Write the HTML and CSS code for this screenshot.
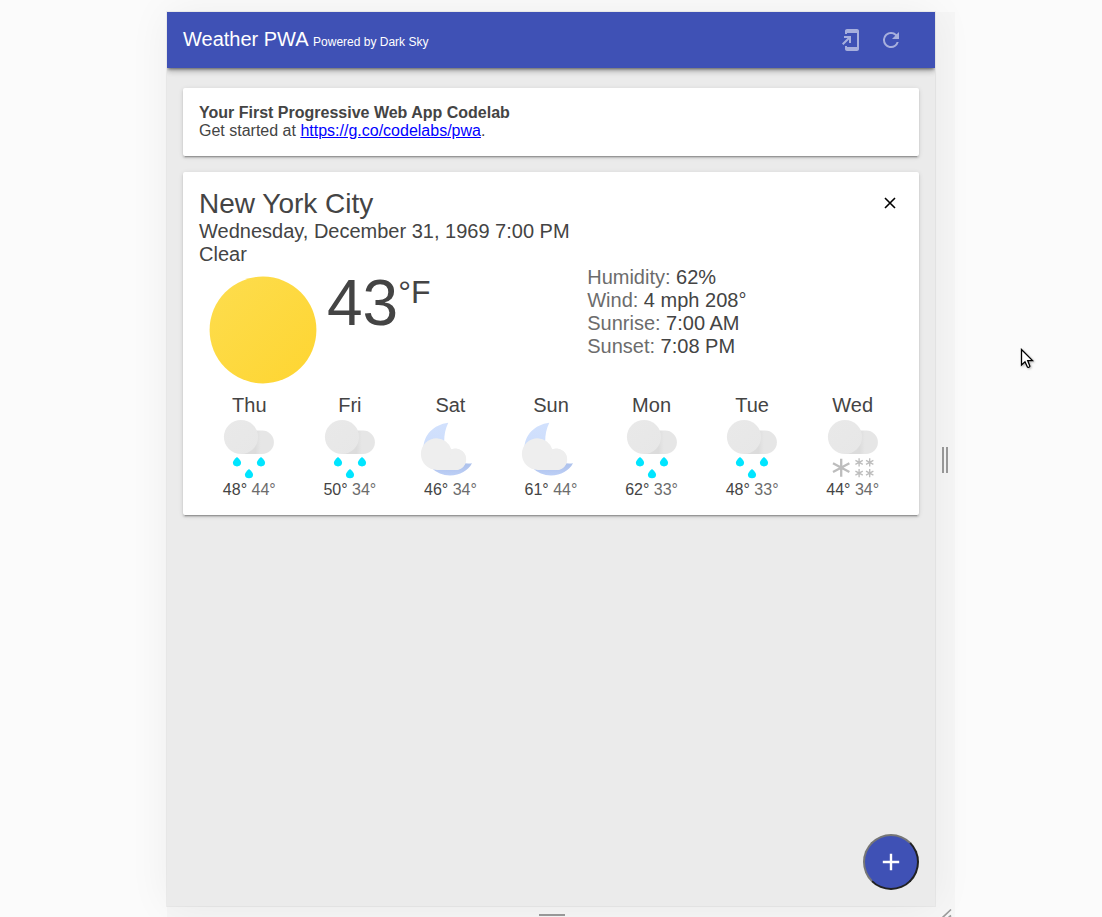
FILE: index.html
```html
<!DOCTYPE html>
<html lang="en">
<head>
<meta charset="utf-8">
<title>Weather PWA</title>
<link rel="stylesheet" href="styles.css">
</head>
<body>
<svg class="defs" width="0" height="0" aria-hidden="true">
  <defs>
    <linearGradient id="sunFill" x1="0" y1="0" x2="1" y2="1"><stop offset="0" stop-color="#fddd4e"/><stop offset="1" stop-color="#fed531"/></linearGradient>
    <linearGradient id="moonFill" x1="0" y1="0" x2="0" y2="1"><stop offset="0" stop-color="#d2e1fd"/><stop offset=".65" stop-color="#cbdcfb"/><stop offset=".8" stop-color="#aec2ec"/><stop offset="1" stop-color="#bdcff6"/></linearGradient>
    <linearGradient id="puffFill" x1="0" y1="0" x2="1" y2="0"><stop offset=".44" stop-color="#dcdcdc"/><stop offset=".6" stop-color="#e6e6e6"/></linearGradient>
    <linearGradient id="cloudFill" x1="0" y1="0" x2="1" y2="1"><stop offset="0" stop-color="#e9e9e9"/><stop offset="1" stop-color="#e7e7e7"/></linearGradient>
    <g id="cloud">
      <path d="M24 37V13.6H45.2a11.7 11.7 0 0 1 0 23.4z" fill="url(#puffFill)"/>
      <circle cx="24" cy="20" r="17.1" fill="url(#cloudFill)"/>
    </g>
    <path id="drop" d="M0-4.7C1.9-3.2 4.1-1 4.1 1 4.1 3.3 2.4 4.6 0 4.6S-4.1 3.3-4.1 1C-4.1-1-1.9-3.2 0-4.7z" fill="#00e5ff"/>
    <path id="flake" d="M0-9V9M-8.2-4.4 8.2 4.4M-8.2 4.4 8.2-4.4" fill="none" stroke="#bdbdbd"/>
    <symbol id="rain" viewBox="0 0 64 64">
      <use href="#cloud"/>
      <use href="#drop" x="20" y="44.8"/><use href="#drop" x="44" y="44.8"/><use href="#drop" x="32" y="56.7"/>
    </symbol>
    <symbol id="night" viewBox="0 0 64 64">
      <g transform="translate(.6 0)">
        <path d="M29.7 5.7C15 7.5 4.8 18 4.8 32a26.5 26.5 0 0 0 26.7 26.4c9.9 0 18-4.7 21.9-12.1C36 47.8 25.6 39 25.6 24.5c0-7 1.2-13 4.1-18.8z" fill="url(#moonFill)"/>
        <path d="M18.2 21.2a16 16 0 0 1 14.6 11.2 10.7 10.7 0 1 1 4 20.6H18.2a15.9 15.9 0 0 1 0-31.8z" fill="#eee"/>
        <path d="M32 32.6a10.4 10.4 0 0 1 4.8-.9 10.6 10.6 0 0 1 0 21.3H30z" fill="#eee"/>
      </g>
    </symbol>
    <symbol id="snow" viewBox="0 0 64 64">
      <use href="#cloud"/>
      <use href="#flake" transform="translate(20.2 50.7)" stroke-width="2.3"/>
      <use href="#flake" transform="translate(38.1 45.4) scale(.45)" stroke-width="3"/>
      <use href="#flake" transform="translate(48.7 45.4) scale(.45)" stroke-width="3"/>
      <use href="#flake" transform="translate(38.1 56.1) scale(.45)" stroke-width="3"/>
      <use href="#flake" transform="translate(48.7 56.1) scale(.45)" stroke-width="3"/>
    </symbol>
  </defs>
</svg>
<div class="device">
  <div class="app">
    <header class="header">
      <h1 class="title">Weather PWA <span class="powered">Powered by Dark Sky</span></h1>
      <svg class="action" viewBox="0 0 24 24"><path d="M18 1.01L8 1c-1.1 0-2 .9-2 2v3h2V5h10v14H8v-1H6v3c0 1.1.9 2 2 2h10c1.1 0 2-.9 2-2V3c0-1.1-.9-1.99-2-1.99zM10 15h2V8H5v2h3.59L3 15.59 4.41 17 10 11.41z"/></svg>
      <svg class="action" viewBox="0 0 24 24"><path d="M17.65 6.35A7.958 7.958 0 0 0 12 4a8 8 0 1 0 7.73 10h-2.08A5.99 5.99 0 0 1 12 18c-3.31 0-6-2.69-6-6s2.69-6 6-6c1.66 0 3.14.69 4.22 1.78L13 11h7V4l-2.35 2.35z"/></svg>
    </header>
    <main class="main">
      <section class="card">
        <b>Your First Progressive Web App Codelab</b>
        <div>Get started at <a href="https://g.co/codelabs/pwa">https://g.co/codelabs/pwa</a>.</div>
      </section>
      <section class="card forecast">
        <div class="heading"><div class="city">New York City</div><button class="remove" aria-label="Remove city"><svg viewBox="0 0 12 12"><path d="M1 1 11 11M11 1 1 11"/></svg></button></div>
        <div>Wednesday, December 31, 1969 7:00 PM</div>
        <div>Clear</div>
        <div class="current">
          <div class="visual">
            <svg class="sun" viewBox="0 0 128 128"><circle cx="64" cy="64" r="53.4" fill="url(#sunFill)"/></svg>
            <div class="temperature"><span class="value">43</span><span class="scale">°F</span></div>
          </div>
          <div class="details">
            <div><span class="label">Humidity:</span> 62%</div>
            <div><span class="label">Wind:</span> 4 mph 208°</div>
            <div><span class="label">Sunrise:</span> 7:00 AM</div>
            <div><span class="label">Sunset:</span> 7:08 PM</div>
          </div>
        </div>
        <div class="future">
          <div class="day"><div>Thu</div><svg class="icon"><use href="#rain"/></svg><div class="range">48° <span class="low">44°</span></div></div>
          <div class="day"><div>Fri</div><svg class="icon"><use href="#rain"/></svg><div class="range">50° <span class="low">34°</span></div></div>
          <div class="day"><div>Sat</div><svg class="icon"><use href="#night"/></svg><div class="range">46° <span class="low">34°</span></div></div>
          <div class="day"><div>Sun</div><svg class="icon"><use href="#night"/></svg><div class="range">61° <span class="low">44°</span></div></div>
          <div class="day"><div>Mon</div><svg class="icon"><use href="#rain"/></svg><div class="range">62° <span class="low">33°</span></div></div>
          <div class="day"><div>Tue</div><svg class="icon"><use href="#rain"/></svg><div class="range">48° <span class="low">33°</span></div></div>
          <div class="day"><div>Wed</div><svg class="icon"><use href="#snow"/></svg><div class="range">44° <span class="low">34°</span></div></div>
        </div>
      </section>
    </main>
    <button class="fab" aria-label="Add city"><svg viewBox="0 0 24 24"><path d="M12 3.8V20.2M3.8 12H20.2"/></svg></button>
  </div>
  <div class="resize-side"><i class="grip"></i></div>
  <div class="resize-bottom"><i class="grip-flat"></i></div>
  <svg class="corner" viewBox="0 0 20 11"><path d="M7 12 16 3.5M13 12 16 9.5" stroke="#9b9b9b" stroke-width="1.7"/></svg>
</div>
<svg class="cursor" viewBox="0 0 16 22"><path d="M1.5 1.5V17L5 13.8 7.4 19c.5 1 2.8 0 2.4-1.1L7.7 12.6H12.5z" fill="#fff" stroke="#000" stroke-width="1.3"/></svg>
</body>
</html>
```
FILE: styles.css
```css
* { box-sizing: border-box; }
body {
  margin: 0;
  height: 917px;
  overflow: hidden;
  background: #fbfbfb;
  color: #444;
  font: 16px "Liberation Sans", Arial, sans-serif;
}
.defs { position: absolute; }
.device {
  display: grid;
  grid-template: 894px 11px / 768px 20px;
  width: 788px;
  margin-left: 167px;
  padding-top: 12px;
  box-sizing: content-box;
}
.app {
  position: relative;
  background: #ebebeb;
  box-shadow: 0 0 0 1px rgba(0, 0, 0, .05), 0 0 40px rgba(0, 0, 0, .06);
}
.header {
  display: flex;
  align-items: center;
  gap: 16px;
  height: 56px;
  padding: 0 32px 0 16px;
  background: #3f51b5;
  color: #fff;
  box-shadow: 0 4px 5px 0 rgba(0, 0, 0, .14), 0 2px 9px -1px rgba(0, 0, 0, .12), 0 2px 3px -1px rgba(0, 0, 0, .5);
  clip-path: inset(0 0 -14px 0);
}
.title { flex: 1; margin: 0; padding-bottom: 2px; font-size: 20px; font-weight: 400; }
.powered { font-size: 12px; }
.action { width: 24px; height: 24px; fill: #fff; opacity: .54; }
.main { display: flex; flex-direction: column; gap: 16px; padding: 20px 16px; }
.card {
  padding: 16px;
  background: #fff;
  border-radius: 2px;
  box-shadow: 0 2px 2px 0 rgba(0, 0, 0, .14), 0 3px 1px -2px rgba(0, 0, 0, .2), 0 1px 5px 0 rgba(0, 0, 0, .12);
}
.card a { color: #00f; }
.forecast { font-size: 20px; }
.heading { display: flex; justify-content: space-between; }
.city { font-size: 28px; line-height: 32px; }
.remove { width: 26px; height: 30px; padding: 0; border: 0; background: none; }
.remove svg { display: block; width: 12px; height: 12px; margin: 0 auto; }
.remove path { stroke: #000; stroke-width: 1.6; }
.current { display: grid; grid-template-columns: 388.2px 1fr; }
.visual { display: flex; height: 128px; }
.sun { width: 128px; height: 128px; }
.temperature { display: flex; align-items: flex-start; }
.value { margin-top: 1px; font-size: 64px; line-height: 73px; }
.scale { font-size: 32px; line-height: 36px; margin-top: 8px; }
.label, .low { color: #6c6c6c; }
.future { display: grid; grid-template-columns: repeat(7, 1fr); }
.day { text-align: center; }
.icon { display: block; width: 64px; height: 64px; margin: 0 auto; }
.range { font-size: 16px; line-height: 18px; }
.fab {
  position: absolute;
  right: 16px;
  bottom: 16px;
  width: 56px;
  height: 56px;
  padding: 0;
  border: 2px solid;
  border-color: #767676 #212121 #212121 #767676;
  border-radius: 50%;
  background: #3f51b5;
}
.fab svg { display: block; width: 24px; height: 24px; margin: auto; }
.fab path { stroke: #fff; stroke-width: 2.4; }
.resize-side, .resize-bottom { display: flex; align-items: center; background: rgba(0, 0, 0, .02); }
.resize-side { padding: 2px 0 0 7px; }
.resize-bottom { justify-content: center; align-items: flex-start; padding: 8px 0 0 2px; }
.grip { width: 6px; height: 26px; border: solid #9b9b9b; border-width: 0 2px; }
.grip-flat { width: 26px; height: 2px; background: #9b9b9b; }
.corner { width: 20px; height: 11px; background: rgba(0, 0, 0, .02); }
.cursor { position: absolute; left: 1020px; top: 348px; width: 16px; height: 22px; filter: drop-shadow(1px 1px 1px rgba(0, 0, 0, .3)); }
```
